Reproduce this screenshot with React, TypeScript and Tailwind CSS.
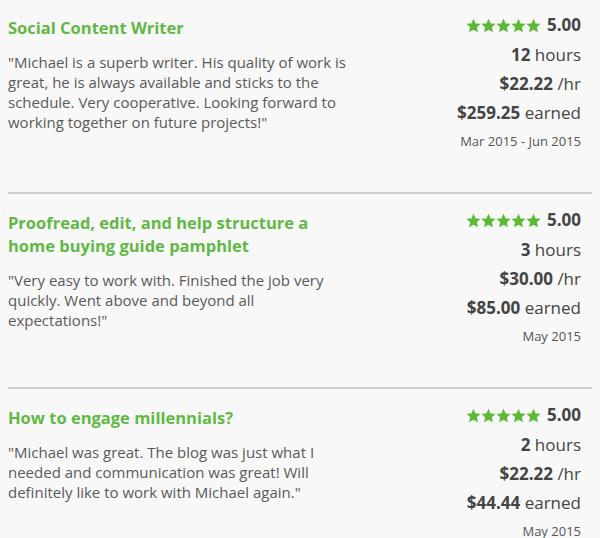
import React from "react";

type Job = {
  title: string;
  quote: string;
  hours: string;
  rate: string;
  earned: string;
  dates: string;
};

const jobs: Job[] = [
  {
    title: "Social Content Writer",
    quote:
      "\"Michael is a superb writer. His quality of work is great, he is always available and sticks to the schedule. Very cooperative. Looking forward to working together on future projects!\"",
    hours: "12",
    rate: "$22.22",
    earned: "$259.25",
    dates: "Mar 2015 - Jun 2015",
  },
  {
    title: "Proofread, edit, and help structure a home buying guide pamphlet",
    quote:
      "\"Very easy to work with. Finished the job very quickly. Went above and beyond all expectations!\"",
    hours: "3",
    rate: "$30.00",
    earned: "$85.00",
    dates: "May 2015",
  },
  {
    title: "How to engage millennials?",
    quote:
      "\"Michael was great. The blog was just what I needed and communication was great! Will definitely like to work with Michael again.\"",
    hours: "2",
    rate: "$22.22",
    earned: "$44.44",
    dates: "May 2015",
  },
];

const Star = () => (
  <svg width="15" height="15" viewBox="1 1 22 21" className="fill-[#5cb934]">
    <path d="M12 1.5l3.1 7 7.4.6-5.6 5 1.7 7.4L12 17.6l-6.6 3.9 1.7-7.4-5.6-5 7.4-.6z" />
  </svg>
);

const JobRow = ({ job }: { job: Job }) => (
  <div className="flex justify-between pr-[11px]">
    <div className="w-[344px] pt-[3px]">
      <h3 className="text-[16.5px] leading-[23px] font-bold text-[#62b844]">{job.title}</h3>
      <p className="mt-[13px] text-[15px] leading-[20px] text-[#5a5a5a]">{job.quote}</p>
    </div>
    <div className="flex flex-col items-end text-[17px] text-[#444]">
      <div className="flex items-center gap-[6px] h-[24px]">
        <div className="flex">
          <Star />
          <Star />
          <Star />
          <Star />
          <Star />
        </div>
        <span className="font-bold text-[17px]">5.00</span>
      </div>
      <div className="mt-[5px] h-[24px]">
        <b>{job.hours}</b> hours
      </div>
      <div className="mt-[5px] h-[24px]">
        <b>{job.rate}</b> /hr
      </div>
      <div className="mt-[5px] h-[24px]">
        <b>{job.earned}</b> earned
      </div>
      <div className="mt-[8px] text-[13px] leading-[18px] text-[#555]">{job.dates}</div>
    </div>
  </div>
);

export default function App() {
  return (
    <div className="w-[600px] h-[538px] overflow-hidden bg-[#f8f8f8] px-[8px] pt-[13px] font-['Open_Sans',sans-serif]">
      {jobs.map((job, i) => (
        <div key={i}>
          {i > 0 && <div className="h-[2px] bg-[#cfcfcf] mt-[42px] mb-[14px]" />}
          <JobRow job={job} />
        </div>
      ))}
    </div>
  );
}
